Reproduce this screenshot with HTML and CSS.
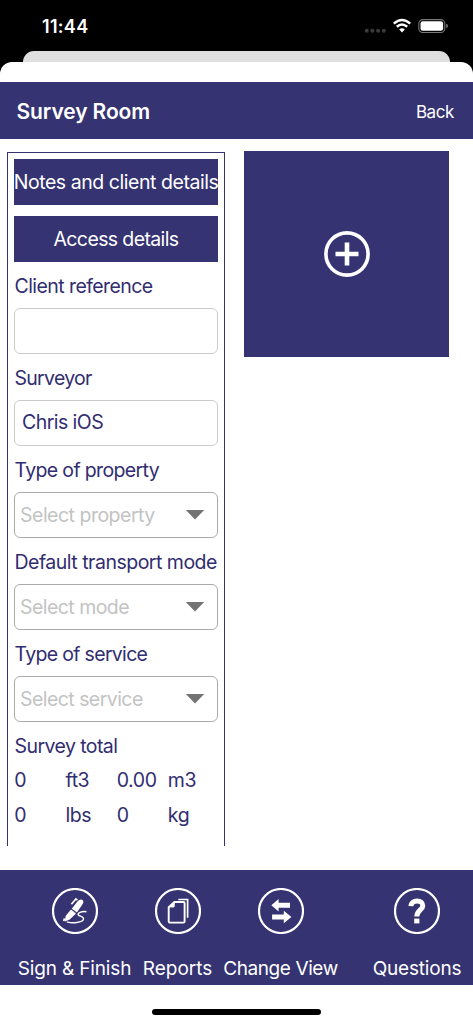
FILE: index.html
```html
<!DOCTYPE html>
<html lang="en">
<head>
<meta charset="utf-8">
<title>Survey Room</title>
<link rel="stylesheet" href="styles.css">
</head>
<body>
<div class="screen">
  <div class="status">
    <span class="time">11:44</span>
    <svg class="indicators" width="86" height="20" viewBox="0 0 86 20">
      <g fill="#3b3b3b"><circle cx="4.7" cy="14.7" r="2"/><circle cx="10.4" cy="14.7" r="2"/><circle cx="16.1" cy="14.7" r="2"/><circle cx="21.8" cy="14.7" r="2"/></g>
      <g fill="none" stroke="#fff" stroke-width="2.5"><path d="M31.8 7.6Q40 .4 48.2 7.6"/><path d="M34.8 10.8Q40 6.2 45.2 10.8"/></g>
      <path d="M37.2 13.5Q40 11.1 42.8 13.5L40 16.5Z" fill="#fff"/>
      <rect x="56.8" y="3.6" width="26" height="12.9" rx="4" fill="none" stroke="#777" stroke-width="1.1"/>
      <rect x="58.5" y="5.2" width="22.6" height="9.6" rx="2.3" fill="#fff"/>
      <path d="M84.2 7.8Q86 8.4 86 10T84.2 12.2Z" fill="#777"/>
    </svg>
  </div>
  <div class="back-sheet"></div>
  <div class="sheet">
    <header class="header"><h1>Survey Room</h1><span class="back">Back</span></header>
    <main class="content">
      <section class="form">
        <div class="button notes">Notes and client details</div>
        <div class="button access">Access details</div>
        <div class="label client">Client reference</div>
        <div class="field"></div>
        <div class="label surveyor">Surveyor</div>
        <div class="field value">Chris iOS</div>
        <div class="label property">Type of property</div>
        <div class="field select"><span class="p-property">Select property</span><svg width="20" height="12" viewBox="0 0 20 12"><path d="M.8 1.1H19.2L10 10.6Z" fill="#737373"/></svg></div>
        <div class="label transport">Default transport mode</div>
        <div class="field select"><span class="p-mode">Select mode</span><svg width="20" height="12" viewBox="0 0 20 12"><path d="M.8 1.1H19.2L10 10.6Z" fill="#737373"/></svg></div>
        <div class="label service">Type of service</div>
        <div class="field select"><span class="p-service">Select service</span><svg width="20" height="12" viewBox="0 0 20 12"><path d="M.8 1.1H19.2L10 10.6Z" fill="#737373"/></svg></div>
        <div class="label total">Survey total</div>
        <div class="totals"><span>0</span><span>ft3</span><span>0.00</span><span>m3</span><span>0</span><span>lbs</span><span>0</span><span>kg</span></div>
      </section>
      <div class="add">
        <svg width="48" height="48" viewBox="0 0 48 48" fill="none" stroke="#fff"><circle cx="24" cy="24" r="21.1" stroke-width="3.6"/><path d="M24 12.5V35.5M12.5 24H35.5" stroke-width="4.6"/></svg>
      </div>
    </main>
    <footer class="footer">
      <div class="tab sign">
        <svg width="46" height="46" viewBox="0 0 46 46"><circle cx="23" cy="23" r="22" fill="none" stroke="#fff" stroke-width="2.2"/>
          <g fill="#fff"><path d="M19.8 20.7 25.6 13.3Q28.4 10.3 30.6 12 32.4 13.7 30.2 16.7L24.9 24.4Z"/><path d="M19 21.6 24 25.5 17.7 31.5 12.9 33.4 13.6 27.9Z"/></g>
          <path d="M19.4 16.2 23.9 10.9 25.4 12.1M12.4 30.4 11.8 33.1" fill="none" stroke="#fff" stroke-width="1.7"/>
          <path d="M34.5 23.7C29.5 23 24.8 25 26.4 27 27.5 28.4 32 28.4 31.5 31.2 30.7 35 20 35.4 14.8 33.8" fill="none" stroke="#fff" stroke-width="1.4"/></svg>
        <span>Sign &amp; Finish</span>
      </div>
      <div class="tab reports">
        <svg width="46" height="46" viewBox="0 0 46 46" fill="none" stroke="#fff"><circle cx="23" cy="23" r="22" stroke-width="2.2"/><path d="M13.7 19.2 19.4 14H28.4Q29.6 14 29.6 15.2V33.4Q29.6 34.6 28.4 34.6H14.9Q13.7 34.6 13.7 33.4Z" stroke-width="1.9"/><path d="M13.5 19.2 19.7 13.8V18.1Q19.7 19.5 18.3 19.5Z" fill="#fff" stroke="none"/><path d="M23.3 11.5H32.6V29.8" stroke-width="1.7"/></svg>
        <span>Reports</span>
      </div>
      <div class="tab change">
        <svg width="46" height="46" viewBox="0 0 46 46"><circle cx="23" cy="23" r="22" fill="none" stroke="#fff" stroke-width="2.2"/><path d="M13.3 17.3 20.6 11V14.8H32V19.8H20.6V23.6ZM33.4 29 25.8 22.7V26.5H14.1V31.5H25.8V35.2Z" fill="#fff"/></svg>
        <span>Change View</span>
      </div>
      <div class="tab questions">
        <svg width="46" height="46" viewBox="0 0 46 46" fill="none" stroke="#fff"><circle cx="23" cy="23" r="22" stroke-width="2.2"/><path d="M16.9 18.2C17.3 11.2 28.8 11.2 28.8 17.7 28.8 22 22.8 22.1 22.8 28.6" stroke-width="5"/><path d="M20.2 33H25.4" stroke-width="4.8"/></svg>
        <span>Questions</span>
      </div>
    </footer>
    <div class="home"></div>
  </div>
</div>
</body>
</html>
```
FILE: styles.css
```css
* { box-sizing: border-box; }
body { margin: 0; background: #000; }
.screen { width: 473px; height: 1024px; overflow: hidden; background: #000; color: #312d70; font-family: Inter, "Liberation Sans", sans-serif; font-size: 19.5px; display: flex; flex-direction: column; }
.status { height: 51px; flex: none; display: flex; justify-content: space-between; align-items: flex-start; padding: 16px 25px 0 42px; color: #fff; }
.time { font-size: 18px; line-height: 21px; font-weight: 600; letter-spacing: .3px; }
.back-sheet { flex: none; height: 11px; margin: 0 23px; border-radius: 11px 11px 0 0; background: #dfdfdf; }
.sheet { height: 962px; flex: none; padding-top: 20px; border-radius: 12px 12px 0 0; background: #fff; display: flex; flex-direction: column; }
.header { height: 57px; flex: none; background: #353371; color: #fff; display: flex; align-items: center; justify-content: space-between; padding: 2px 19px 0 16.5px; }
h1 { margin: 0; font-size: 21px; font-weight: 600; line-height: 26px; letter-spacing: -.1px; }
.back { font-size: 17px; letter-spacing: -.4px; }
.content { height: 731px; flex: none; display: flex; align-items: flex-start; padding: 12px 0 0 7px; }
.form { width: 218px; height: 694px; margin-top: 1px; border: solid #353371; border-width: 1px 1px 0; padding: 6px 6px 0; }
.button { height: 46px; background: #353371; color: #fff; text-align: center; line-height: 47px; white-space: nowrap; display: flex; justify-content: center; }
.notes { letter-spacing: -.45px; }
.access { margin-top: 11px; letter-spacing: -.62px; }
.label { height: 46px; line-height: 48px; padding-left: .5px; white-space: nowrap; letter-spacing: -.57px; }
.surveyor { letter-spacing: -.72px; }
.property { letter-spacing: -.65px; }
.transport { letter-spacing: -.5px; }
.service { letter-spacing: -.68px; }
.field { height: 46px; border: 1px solid #ccc; border-radius: 6px; line-height: 43px; letter-spacing: -.55px; }
.value { padding-left: 7px; }
.select { border-color: #aaa; display: flex; align-items: center; justify-content: space-between; padding: 0 12px 0 5px; color: #c3c3c3; white-space: nowrap; }
.p-property { letter-spacing: -.5px; }
.totals { display: grid; grid-template-columns: repeat(4, 51.2px); grid-auto-rows: 35px; line-height: 35px; letter-spacing: -.4px; margin-top: -5px; padding-left: .3px; }
.add { width: 205px; height: 205.5px; margin-left: 19px; background: #353371; display: flex; align-items: center; justify-content: center; }
.footer { height: 115px; flex: none; background: #353371; color: #fff; padding: 17.5px 0 0 16px; display: flex; font-size: 19px; }
.tab { display: flex; flex-direction: column; align-items: center; white-space: nowrap; }
.tab span { line-height: 24px; margin-top: 23px; }
.sign { width: 117px; letter-spacing: -.15px; }
.reports { width: 89px; }
.change { width: 117px; letter-spacing: -.4px; }
.questions { width: 90px; margin-left: 33px; letter-spacing: -.2px; }
.home { width: 169px; height: 6px; margin: 24px 0 0 152px; border-radius: 3px; background: #000; }
```
